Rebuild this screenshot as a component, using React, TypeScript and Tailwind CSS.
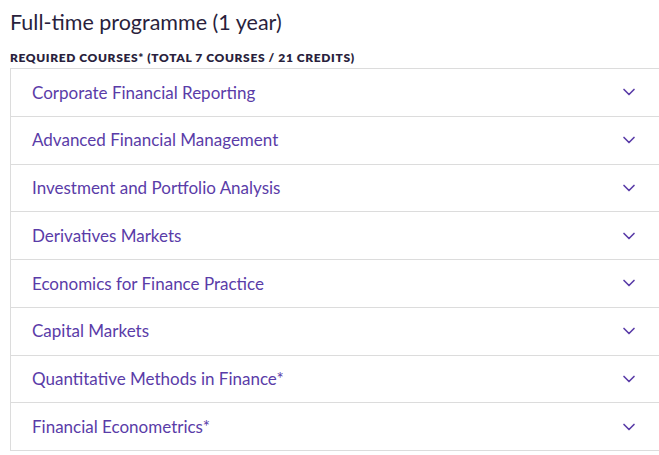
import { ChevronDown } from "lucide-react";

const courses = [
  "Corporate Financial Reporting",
  "Advanced Financial Management",
  "Investment and Portfolio Analysis",
  "Derivatives Markets",
  "Economics for Finance Practice",
  "Capital Markets",
  "Quantitative Methods in Finance*",
  "Financial Econometrics*",
];

export default function App() {
  return (
    <div className="min-h-screen bg-white pl-[10px] pt-[9px] font-['Lato',sans-serif]">
      <h2 className="text-[21.5px] leading-[26px] text-[#2a1f3d]">Full-time programme (1 year)</h2>
      <p className="mt-[16px] text-[12px] font-extrabold leading-[14px] tracking-[0.62px] text-[#2a1f3d]">
        REQUIRED COURSES* (TOTAL 7 COURSES / 21 CREDITS)
      </p>
      <ul className="mt-[3px] w-[660px] border-l border-t border-[#dcdcdc]">
        {courses.map((c) => (
          <li
            key={c}
            className="flex h-[47.75px] items-center justify-between border-b border-[#dcdcdc] pl-[21px] pr-[31px]"
          >
            <span className="text-[17px] text-[#5a3ca8]">{c}</span>
            <ChevronDown className="h-[20px] w-[20px] text-[#5a3ca8]" strokeWidth={2} />
          </li>
        ))}
      </ul>
    </div>
  );
}
